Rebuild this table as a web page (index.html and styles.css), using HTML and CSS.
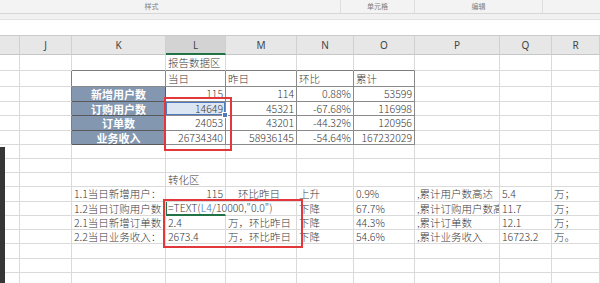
FILE: index.html
```html
<!DOCTYPE html>
<html lang="zh-CN">
<head>
<meta charset="utf-8">
<title>报告数据区</title>
<link rel="stylesheet" href="styles.css">
</head>
<body>
<div class="app">
  <div class="ribbon">
    <div class="grp g1">样式</div>
    <div class="grp g2">单元格</div>
    <div class="grp g3">编辑</div>
    <div class="grp g4"></div>
  </div>
  <div class="band"></div>
  <div class="fbar"></div>

  <div class="row hdr">
    <div class="h"></div><div class="h">J</div><div class="h">K</div><div class="h on">L</div><div class="h">M</div><div class="h">N</div><div class="h">O</div><div class="h">P</div><div class="h">Q</div><div class="h">R</div>
  </div>

  <div class="row h16">
    <div class="c"></div><div class="c"></div><div class="c bb"></div><div class="c bb">报告数据区</div><div class="c bb"></div><div class="c bb"></div><div class="c bb"></div><div class="c"></div><div class="c"></div><div class="c"></div>
  </div>
  <div class="row h16">
    <div class="c"></div><div class="c br"></div><div class="c t"></div><div class="c t">当日</div><div class="c t">昨日</div><div class="c t">环比</div><div class="c t">累计</div><div class="c"></div><div class="c"></div><div class="c"></div>
  </div>
  <div class="row h15">
    <div class="c"></div><div class="c br"></div><div class="c t lab">新增用户数</div><div class="c t r">115</div><div class="c t r">114</div><div class="c t r">0.88%</div><div class="c t r">53599</div><div class="c"></div><div class="c"></div><div class="c"></div>
  </div>
  <div class="row h14">
    <div class="c"></div><div class="c br"></div><div class="c t lab">订购用户数</div><div class="c t r sel">14649</div><div class="c t r">45321</div><div class="c t r">-67.68%</div><div class="c t r">116998</div><div class="c"></div><div class="c"></div><div class="c"></div>
  </div>
  <div class="row h15">
    <div class="c"></div><div class="c br"></div><div class="c t lab">订单数</div><div class="c t r">24053</div><div class="c t r">43201</div><div class="c t r">-44.32%</div><div class="c t r">120956</div><div class="c"></div><div class="c"></div><div class="c"></div>
  </div>
  <div class="row h14">
    <div class="c"></div><div class="c br"></div><div class="c t lab">业务收入</div><div class="c t r">26734340</div><div class="c t r">58936145</div><div class="c t r">-54.64%</div><div class="c t r">167232029</div><div class="c"></div><div class="c"></div><div class="c"></div>
  </div>
  <div class="row h14">
    <div class="c"></div><div class="c"></div><div class="c"></div><div class="c"></div><div class="c"></div><div class="c"></div><div class="c"></div><div class="c"></div><div class="c"></div><div class="c"></div>
  </div>
  <div class="row h14">
    <div class="c"></div><div class="c"></div><div class="c"></div><div class="c"></div><div class="c"></div><div class="c"></div><div class="c"></div><div class="c"></div><div class="c"></div><div class="c"></div>
  </div>
  <div class="row h14">
    <div class="c"></div><div class="c"></div><div class="c"></div><div class="c">转化区</div><div class="c"></div><div class="c"></div><div class="c"></div><div class="c"></div><div class="c"></div><div class="c"></div>
  </div>
  <div class="row h15">
    <div class="c"></div><div class="c"></div><div class="c">1.1当日新增用户：</div><div class="c r">115</div><div class="c ind">环比昨日</div><div class="c">上升</div><div class="c">0.9%</div><div class="c">,累计用户数高达</div><div class="c">5.4</div><div class="c">万；</div>
  </div>
  <div class="row h14">
    <div class="c"></div><div class="c"></div><div class="c clip">1.2当日订购用户数</div><div class="c edit">=TEXT(<span class="ref">L4</span>/10000,"0.0")</div><div class="c"></div><div class="c">下降</div><div class="c">67.7%</div><div class="c clip">,累计订购用户数高</div><div class="c">11.7</div><div class="c">万；</div>
  </div>
  <div class="row h14">
    <div class="c"></div><div class="c"></div><div class="c clip">2.1当日新增订单数</div><div class="c">2.4</div><div class="c">万，环比昨日</div><div class="c">下降</div><div class="c">44.3%</div><div class="c">,累计订单数</div><div class="c">12.1</div><div class="c">万；</div>
  </div>
  <div class="row h14">
    <div class="c"></div><div class="c"></div><div class="c">2.2当日业务收入：</div><div class="c">2673.4</div><div class="c">万，环比昨日</div><div class="c">下降</div><div class="c">54.6%</div><div class="c">,累计业务收入</div><div class="c">16723.2</div><div class="c">万。</div>
  </div>
  <div class="row h15">
    <div class="c"></div><div class="c"></div><div class="c"></div><div class="c"></div><div class="c"></div><div class="c"></div><div class="c"></div><div class="c"></div><div class="c"></div><div class="c"></div>
  </div>
  <div class="row h14">
    <div class="c"></div><div class="c"></div><div class="c"></div><div class="c"></div><div class="c"></div><div class="c"></div><div class="c"></div><div class="c"></div><div class="c"></div><div class="c"></div>
  </div>
  <div class="row h14">
    <div class="c"></div><div class="c"></div><div class="c"></div><div class="c"></div><div class="c"></div><div class="c"></div><div class="c"></div><div class="c"></div><div class="c"></div><div class="c"></div>
  </div>

  <div class="redbox rb1"></div>
  <div class="redbox rb2"></div>
  <div class="edge"></div>
</div>
</body>
</html>
```

FILE: styles.css
```css
* { box-sizing: border-box; margin: 0; padding: 0; }
body {
  width: 600px;
  height: 283px;
  overflow: hidden;
  background: #fff;
  font-family: "Noto Sans CJK SC", "Noto Sans", sans-serif;
  color: #3a3a3a;
}
.app { position: relative; width: 600px; height: 283px; overflow: hidden; }

.ribbon {
  display: flex;
  height: 14px;
  background: #f3f3f3;
  border-bottom: 1px solid #d6d6d6;
}
.grp {
  height: 13px;
  font-size: 7px;
  line-height: 13px;
  color: #808080;
  text-align: center;
  border-right: 1px solid #dedede;
}
.g1 { width: 341px; padding-right: 37px; }
.g2 { width: 74px; }
.g3 { width: 128px; }
.g4 { flex: 1; border-right: 0; }
.band { height: 6px; background: #f1f1f1; border-bottom: 1px solid #e2e2e2; }
.fbar { height: 16px; background: #fff; border-bottom: 1px solid #cacaca; }

.row {
  display: grid;
  grid-template-columns: 20px 52px 94px 60px 71px 57px 61px 85px 52px 48px;
}
.hdr { height: 19px; background: #e7e7e7; }
.h {
  display: flex;
  align-items: center;
  justify-content: center;
  font-family: "Noto Sans", sans-serif;
  font-size: 10px;
  color: #444;
  border-right: 1px solid #d0d0d0;
  border-bottom: 1px solid #c6c6c6;
}
.h.on { background: #d3d3d3; border-bottom: 2px solid #217346; }

.h16 { height: 16px; }
.h15 { height: 15px; }
.h14 { height: 14px; }

.c {
  display: flex;
  align-items: center;
  min-width: 0;
  padding: 0 2px;
  font-size: 10.5px;
  font-weight: 300;
  line-height: 12px;
  white-space: nowrap;
  overflow: visible;
  border-right: 1px solid #dadada;
  border-bottom: 1px solid #dadada;
}
.clip { overflow-x: clip; }
.ind { padding-left: 12px; }
.r { justify-content: flex-end; }
.bb { border-bottom-color: #7d7d7d; }
.br { border-right-color: #7d7d7d; }
.t { border-right-color: #8a8a8a; border-bottom-color: #8a8a8a; }
.lab {
  justify-content: center;
  background: #8497b0;
  color: #fff;
  font-weight: bold;
  font-size: 11px;
  border-right-color: #595959;
  border-bottom-color: #595959;
}
.sel {
  position: relative;
  background: #dce6f3;
  box-shadow: inset 0 0 0 1px #4f7ac0;
}
.sel::after {
  content: "";
  position: absolute;
  right: -3px;
  bottom: -3px;
  width: 4px;
  height: 4px;
  background: #4f7ac0;
  border: 1px solid #fff;
}
.edit {
  position: relative;
  z-index: 1;
  border-right-color: transparent;
  border-bottom: 2px solid #217346;
  box-shadow: inset 1px 0 0 #217346;
}
.ref { color: #3f6fc6; }

.redbox {
  position: absolute;
  border: 2px solid #e2383c;
  z-index: 3;
}
.rb1 { left: 164px; top: 97px; width: 68px; height: 54px; }
.rb2 { left: 163px; top: 199px; width: 140px; height: 49px; }
.edge {
  position: absolute;
  left: 0;
  top: 147px;
  width: 5px;
  height: 136px;
  background: #363636;
  z-index: 3;
}
```
